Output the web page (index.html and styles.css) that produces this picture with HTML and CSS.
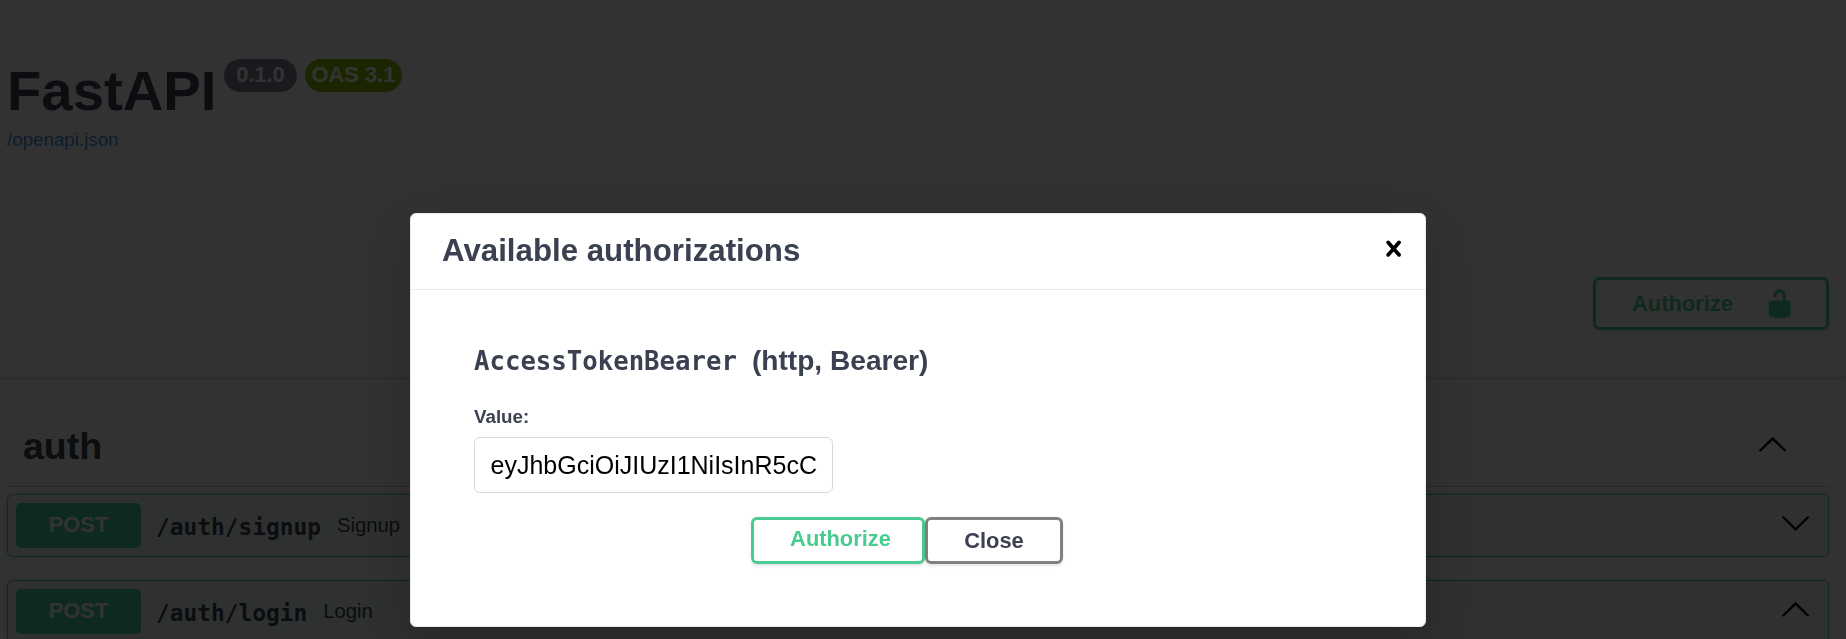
FILE: index.html
```html
<!DOCTYPE html>
<html lang="en">
<head>
<meta charset="utf-8">
<title>FastAPI - Swagger UI</title>
<link rel="stylesheet" href="styles.css">
</head>
<body>
<svg class="defs" width="0" height="0">
  <symbol id="unlocked" viewBox="0 0 20 20"><path d="M15.8 8H14V5.6C14 2.703 12.665 1 10 1 7.334 1 6 2.703 6 5.6V6h2v-.801C8 3.754 8.797 3 10 3c1.203 0 2 .754 2 2.199V8H4c-.553 0-1 .646-1 1.199V17c0 .549.428 1.139.951 1.307l1.197.387C5.672 18.861 6.55 19 7.1 19h5.8c.549 0 1.428-.139 1.951-.307l1.196-.387c.524-.167.953-.757.953-1.306V9.199C17 8.646 16.352 8 15.8 8z"/></symbol>
  <symbol id="close" viewBox="0 0 20 20"><path d="M14.348 14.849c-.469.469-1.229.469-1.697 0L10 11.819l-2.651 3.029c-.469.469-1.229.469-1.697 0-.469-.469-.469-1.229 0-1.697l2.758-3.15-2.759-3.152c-.469-.469-.469-1.228 0-1.697.469-.469 1.228-.469 1.697 0L10 8.183l2.651-3.031c.469-.469 1.228-.469 1.697 0 .469.469.469 1.229 0 1.697l-2.758 3.152 2.758 3.15c.469.469.469 1.229 0 1.698z"/></symbol>
  <symbol id="arrow-up" viewBox="0 0 20 20"><path d="M17.418 14.908c.272.268.709.268.979 0s.271-.701 0-.969l-7.908-7.86c-.27-.268-.707-.268-.979 0l-7.908 7.86c-.27.268-.27.701 0 .969.271.268.709.268.979 0L10 7.767l7.418 7.141z"/></symbol>
  <symbol id="arrow-down" viewBox="0 0 20 20"><path d="M17.418 6.109c.272-.268.709-.268.979 0s.271.701 0 .969l-7.908 7.83c-.27.268-.707.268-.979 0l-7.908-7.83c-.27-.268-.27-.701 0-.969.271-.268.709-.268.979 0L10 13.25l7.418-7.141z"/></symbol>
</svg>

<div class="page">
  <header class="info">
    <div class="title-row">
      <h1 class="title">FastAPI</h1>
      <span class="badge version">0.1.0</span>
      <span class="badge oas">OAS 3.1</span>
    </div>
    <a class="spec-link">/openapi.json</a>
  </header>

  <section class="scheme">
    <button class="btn authorize unlocked"><span>Authorize</span><svg class="icon"><use href="#unlocked"/></svg></button>
  </section>

  <main class="operations">
    <div class="tag"><h2 class="tag-name">auth</h2><svg class="icon"><use href="#arrow-up"/></svg></div>
    <div class="opblock">
      <span class="method">POST</span>
      <span class="path">/auth/signup</span>
      <span class="summary">Signup</span>
      <svg class="icon"><use href="#arrow-down"/></svg>
    </div>
    <div class="opblock">
      <span class="method">POST</span>
      <span class="path">/auth/login</span>
      <span class="summary">Login</span>
      <svg class="icon"><use href="#arrow-up"/></svg>
    </div>
  </main>
</div>

<div class="backdrop"></div>
<div class="modal">
  <div class="modal-header">
    <h3 class="modal-title">Available authorizations</h3>
    <svg class="icon"><use href="#close"/></svg>
  </div>
  <div class="modal-content">
    <h4 class="scheme-name"><code>AccessTokenBearer</code><span>(http, Bearer)</span></h4>
    <label class="label" for="token">Value:</label>
    <div class="field" id="token">eyJhbGciOiJIUzI1NiIsInR5cC</div>
    <div class="actions">
      <button class="btn authorize">Authorize</button>
      <button class="btn done">Close</button>
    </div>
  </div>
</div>
</body>
</html>
```
FILE: styles.css
```css
* { box-sizing: border-box; }
html, body { height: 100%; overflow: hidden; }
body {
  margin: 0;
  background: #fafafa;
  color: #3b4151;
  font-family: "Liberation Sans", Arial, sans-serif;
}
h1, h2, h3, h4 { margin: 0; }
.defs { display: block; }
.icon { width: 31.25px; height: 31.25px; flex: none; fill: currentColor; }
.page { width: 1836px; }

.info { height: 230px; padding: 59px 0 0 7px; }
.title-row { display: flex; align-items: flex-start; }
.title { font-size: 56.25px; line-height: 64px; }
.badge {
  height: 33px;
  border-radius: 17px;
  color: #fff;
  font-size: 21.875px;
  font-weight: bold;
  line-height: 32px;
  text-align: center;
}
.version { width: 73px; margin-left: 8px; padding-right: 1px; background: #7d8492; }
.oas { width: 97px; margin-left: 8px; padding-right: 1px; background: #89bf04; }
.spec-link { display: block; margin-top: 6px; color: #4990e2; font-size: 18.75px; line-height: 22px; }

.scheme {
  display: flex;
  justify-content: flex-end;
  width: 1846px;
  height: 147px;
  padding: 47px 17px 0 0;
  box-shadow: 0 1.5px 3px rgba(0, 0, 0, .15);
  clip-path: inset(2px 0 -6px 0);
}
.btn {
  border: 3px solid #808080;
  border-radius: 6px;
  padding: 0;
  background: transparent;
  box-shadow: 0 1.5px 3px rgba(0, 0, 0, .1);
  color: #3b4151;
  font-family: inherit;
  font-size: 21.875px;
  font-weight: bold;
}
.btn.authorize { border-color: #49cc90; color: #49cc90; }
.unlocked {
  display: flex;
  align-items: center;
  justify-content: space-between;
  width: 236px;
  height: 53px;
  padding: 0 31px 0 36px;
}
.unlocked span { padding-top: 1px; }

.operations { padding: 32px 7px 0; }
.tag {
  display: flex;
  align-items: center;
  justify-content: space-between;
  height: 78px;
  padding: 0 41px 7px 16px;
  border-bottom: 1px solid rgba(59, 65, 81, .3);
}
.tag-name { padding-top: 3px; font-size: 37.5px; line-height: 44px; }
.opblock {
  display: flex;
  align-items: center;
  height: 63px;
  margin: 7px 0 23px;
  padding: 0 17px 0 8px;
  border: 1px solid #49cc90;
  border-radius: 6px;
  background: rgba(73, 204, 144, .1);
  box-shadow: 0 0 4.7px rgba(0, 0, 0, .19);
}
.method {
  width: 125px;
  height: 45px;
  border-radius: 5px;
  background: #49cc90;
  color: #fff;
  font-size: 21.875px;
  font-weight: bold;
  line-height: 43px;
  text-align: center;
}
.path {
  margin: 2px 0 0 15px;
  font-family: "DejaVu Sans Mono", monospace;
  font-size: 22.84px;
  font-weight: bold;
}
.summary { flex: 1; margin-left: 16px; font-size: 20.31px; }
.opblock .icon { position: relative; top: -3px; }
.tag .icon, .opblock .icon { color: #000; }

.backdrop { position: fixed; inset: 0; background: rgba(0, 0, 0, .8); }
.modal {
  position: absolute;
  left: 410px;
  top: 213px;
  width: 1016px;
  height: 414px;
  border: 1px solid #ebebeb;
  border-radius: 6px;
  background: #fff;
  box-shadow: 0 16px 47px rgba(0, 0, 0, .2);
}
.modal-header {
  display: flex;
  align-items: center;
  justify-content: space-between;
  height: 76px;
  padding: 0 16px 5px 31px;
  border-bottom: 1px solid #ebebeb;
}
.modal-header .icon { color: #000; }
.modal-title { padding-top: 3px; font-size: 31.25px; line-height: 36px; }
.modal-content { padding: 55px 31px 0 63px; }
.scheme-name { display: flex; align-items: baseline; font-size: 28.125px; line-height: 32px; }
.scheme-name code { margin-right: 15px; font-family: "DejaVu Sans Mono", monospace; font-size: 25.7px; }
.label { display: block; margin-top: 29px; font-size: 18.75px; font-weight: bold; line-height: 22px; }
.field {
  width: 359px;
  height: 56px;
  margin-top: 9px;
  padding-left: 15.5px;
  border: 1px solid #d9d9d9;
  border-radius: 6px;
  color: #000;
  font-size: 25px;
  line-height: 55px;
  white-space: nowrap;
}
.actions { display: flex; margin: 24px 0 0 277px; }
.actions .authorize { width: 174px; height: 47px; padding: 0 0 3px 5px; }
.actions .done { width: 138px; height: 47px; padding-top: 1px; }
```
